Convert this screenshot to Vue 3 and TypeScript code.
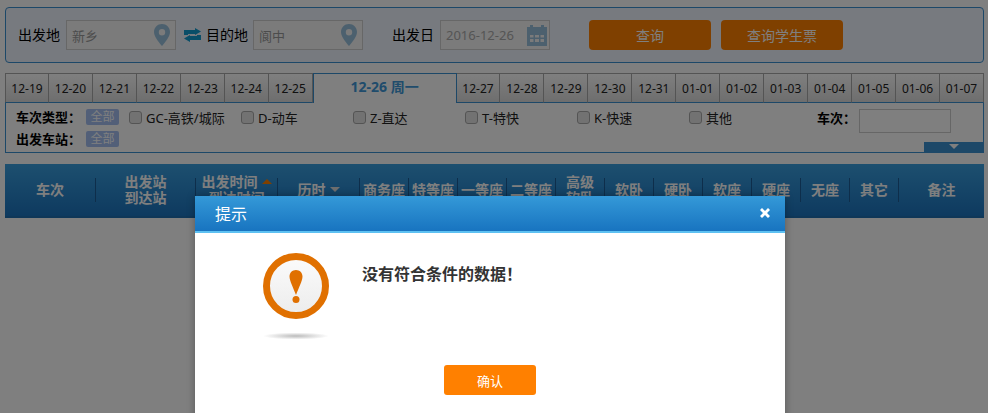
<template>
  <div class="page">
    <div class="search">
      <span class="lbl">出发地</span>
      <div class="inp"><span>新乡</span><svg class="pin" viewBox="0 0 16 22"><path fill-rule="evenodd" d="M8 0C3.6 0 0 3.5 0 7.9c0 5 6 11.300 8 14.100 2-2.800 8-9.100 8-14.100C16 3.500 12.400 0 8 0zm0 5a3.200 3.200 0 1 1 0 6.400A3.200 3.200 0 0 1 8 5z"/></svg></div>
      <svg class="swap" viewBox="0 0 17 14"><path d="M0 7V2h11V0l6 3.500L11 7V6H4v1z"/><path d="M17 7v5H6v2l-6-3.500L6 7v1h7V7z"/></svg>
      <span class="lbl">目的地</span>
      <div class="inp inp-to"><span>阆中</span><svg class="pin" viewBox="0 0 16 22"><path fill-rule="evenodd" d="M8 0C3.6 0 0 3.5 0 7.9c0 5 6 11.300 8 14.100 2-2.800 8-9.100 8-14.100C16 3.500 12.400 0 8 0zm0 5a3.200 3.200 0 1 1 0 6.400A3.200 3.200 0 0 1 8 5z"/></svg></div>
      <span class="lbl lbl-date">出发日</span>
      <div class="inp"><span class="date">2016-12-26</span><svg class="cal" viewBox="0 0 20 21"><path fill-rule="evenodd" d="M0 2h3V0h3v2h8V0h3v2h3v19H0zm3 8v2.500h3.500V10zm5 0v2.500h4V10zm5.500 0v2.500H17V10zM3 14v3h3.500v-3zm5 0v3h4v-3zm5.500 0v3H17v-3z"/></svg></div>
      <button class="btn btn-q">查询</button>
      <button class="btn">查询学生票</button>
    </div>

    <div class="tabs">
      <div v-for="t in tabs" :key="t" class="tab" :class="{ active: t === current }">{{ t === current ? t + ' 周一' : t }}</div>
    </div>

    <div class="filter">
      <div class="frow">
        <b class="flabel">车次类型：</b>
        <span class="all">全部</span>
        <div class="types">
          <label v-for="c in types" :key="c" class="type"><i class="check"></i>{{ c }}</label>
        </div>
        <b class="num-label">车次：</b>
        <div class="num-input"></div>
      </div>
      <div class="frow frow2">
        <b class="flabel">出发车站：</b>
        <span class="all">全部</span>
      </div>
      <div class="toggle"><i></i></div>
    </div>

    <div class="thead">
      <div v-for="c in cols" :key="c.name" class="th" :style="{ width: c.w + 'px' }">
        <span class="th-text">{{ c.name }}<i v-if="c.caret" class="caret" :class="c.caret"></i></span>
        <span v-if="c.sub" class="th-text">{{ c.sub }}</span>
      </div>
    </div>

    <div class="mask"></div>
    <div class="modal">
      <div class="mhead">
        <span>提示</span>
        <svg class="close" viewBox="0 0 12 12"><path d="M1 3l2-2 3 3 3-3 2 2-3 3 3 3-2 2-3-3-3 3-2-2 3-3z"/></svg>
      </div>
      <div class="mbody">
        <div class="icon">
          <svg viewBox="0 0 66 90" width="66" height="90">
            <defs>
              <linearGradient id="face" x1="0" y1="0" x2="0" y2="1">
                <stop offset="0" stop-color="#fbfbfb" />
                <stop offset="1" stop-color="#ececec" />
              </linearGradient>
              <radialGradient id="shade">
                <stop offset="0" stop-color="#bbb" />
                <stop offset="1" stop-color="#fff" />
              </radialGradient>
            </defs>
            <circle cx="33" cy="33" r="29.500" fill="url(#face)" stroke="#e07000" stroke-width="7" />
            <path d="M33 17c-3.700 0-6.500 2.800-6.500 6.500 0 4 4 12 6.500 18.500 2.500-6.500 6.500-14.500 6.500-18.500 0-3.700-2.800-6.500-6.500-6.500z" fill="#e07000" />
            <circle cx="33" cy="46.500" r="3.500" fill="#e07000" />
            <ellipse cx="33" cy="83" rx="33" ry="3.500" fill="url(#shade)" />
          </svg>
        </div>
        <div class="msg">没有符合条件的数据！</div>
      </div>
      <div class="mfoot"><button class="ok">确认</button></div>
    </div>
  </div>
</template>

<script setup lang="ts">
const current = '12-26';
const tabs: string[] = [
  '12-19', '12-20', '12-21', '12-22', '12-23', '12-24', '12-25', '12-26',
  '12-27', '12-28', '12-29', '12-30', '12-31',
  '01-01', '01-02', '01-03', '01-04', '01-05', '01-06', '01-07',
];
const types: string[] = ['GC-高铁/城际', 'D-动车', 'Z-直达', 'T-特快', 'K-快速', '其他'];

interface Col {
  name: string;
  sub?: string;
  w: number;
  caret?: string;
}
const cols: Col[] = [
  { name: '车次', w: 91 },
  { name: '出发站', sub: '到达站', w: 100 },
  { name: '出发时间', sub: '到达时间', w: 82, caret: 'up' },
  { name: '历时', w: 82, caret: 'down' },
  { name: '商务座', w: 49 },
  { name: '特等座', w: 49 },
  { name: '一等座', w: 49 },
  { name: '二等座', w: 49 },
  { name: '高级', sub: '软卧', w: 49 },
  { name: '软卧', w: 49 },
  { name: '硬卧', w: 49 },
  { name: '软座', w: 49 },
  { name: '硬座', w: 49 },
  { name: '无座', w: 49 },
  { name: '其它', w: 49 },
  { name: '备注', w: 85 },
];
</script>

<style scoped>
.page {
  position: relative;
  width: 988px;
  height: 413px;
  overflow: hidden;
  box-sizing: border-box;
  padding: 7px 4px 0 5px;
  background: #fff;
  font-family: "Noto Sans", "Noto Sans CJK SC", sans-serif;
  color: #000;
}
.search {
  display: flex;
  align-items: center;
  height: 56px;
  box-sizing: border-box;
  padding-left: 12px;
  border: 1px solid #3a90d0;
  border-radius: 4px;
  background: #eef4ff;
}
.lbl {
  font-size: 14px;
  line-height: 30px;
  width: 42px;
  flex: none;
}
.inp {
  display: flex;
  align-items: center;
  justify-content: space-between;
  width: 110px;
  height: 30px;
  margin-left: 6px;
  box-sizing: border-box;
  padding: 0 2px 0 5px;
  flex: none;
  border: 1px solid #cfcfcf;
  background: #f6f6f6;
  font-size: 13px;
  color: #999;
}
.inp-to {
  margin-left: 5px;
}
.pin {
  width: 16px;
  height: 22px;
  margin-right: 3px;
  fill: #98c0dc;
}
.swap {
  width: 17px;
  height: 14px;
  margin: 0 5px 0 8px;
  fill: #149cd0;
  flex: none;
}
.lbl-date {
  margin-left: 29px;
}
.date {
  color: #aaa;
}
.cal {
  width: 20px;
  height: 21px;
  fill: #98c0dc;
  margin-top: 1px;
}
.btn {
  width: 122px;
  height: 30px;
  margin-left: 10px;
  flex: none;
  border: 0;
  border-radius: 4px;
  padding: 0;
  background: #ff8000;
  color: #fff;
  font: 14px "Noto Sans", "Noto Sans CJK SC", sans-serif;
}
.btn-q {
  margin-left: 39px;
}
.tabs {
  display: flex;
  height: 30px;
  margin-top: 10px;
  box-sizing: border-box;
}
.tab {
  width: 44px;
  height: 30px;
  box-sizing: border-box;
  border: 1px solid #a8a8a8;
  border-left: 0;
  border-bottom: 1px solid #3a90d0;
  text-align: center;
  line-height: 30px;
  font-size: 12px;
  color: #222;
  background: linear-gradient(#fff, #dcdcdc);
}
.tab:first-child {
  border-left: 1px solid #a8a8a8;
}
.tab.active {
  width: 144px;
  border: 1px solid #3a90d0;
  border-bottom: 0;
  background: #fff;
  color: #4098d8;
  font-size: 14px;
  font-weight: 700;
  line-height: 26px;
}
.filter {
  position: relative;
  height: 51px;
  box-sizing: border-box;
  margin-top: -1px;
  padding: 6px 0 0 10px;
  border: 1px solid #3a90d0;
  border-top-color: transparent;
  font-size: 13px;
}
.frow {
  display: flex;
  align-items: flex-start;
  height: 24px;
}
.frow2 {
  margin-top: -2px;
  height: 16px;
}
.flabel {
  width: 70px;
  line-height: 16px;
  flex: none;
}
.all {
  width: 33px;
  height: 16px;
  flex: none;
  border-radius: 2px;
  background: #a4bef0;
  color: #fff;
  font-size: 12px;
  text-align: center;
  line-height: 16px;
}
.types {
  display: flex;
  flex: none;
  margin-left: 10px;
}
.type {
  display: flex;
  align-items: center;
  width: 112px;
  height: 16px;
  color: #222;
}
.check {
  width: 11px;
  height: 11px;
  margin-right: 4px;
  border: 1px solid #a8a8a8;
  border-radius: 3px;
  background: #e4e4e4;
}
.num-label {
  margin-left: 16px;
  width: 42px;
  flex: none;
  line-height: 18px;
}
.num-input {
  width: 92px;
  height: 24px;
  box-sizing: border-box;
  border: 1px solid #ccc;
}
.toggle {
  position: absolute;
  right: 0;
  bottom: 0;
  width: 59px;
  height: 10px;
  background: #3a90d0;
  display: flex;
  justify-content: center;
}
.toggle i {
  margin-top: 2px;
  width: 0;
  height: 0;
  border: 5px solid transparent;
  border-top-color: #fff;
  border-bottom: 0;
}
.thead {
  display: flex;
  height: 54px;
  margin-top: 11px;
  box-sizing: border-box;
  align-items: center;
  border-bottom: 2px solid #1f6fb0;
  background: linear-gradient(#3a9fdf, #1c74bf);
}
.th {
  display: flex;
  flex-direction: column;
  justify-content: center;
  align-items: center;
  height: 24px;
  box-sizing: border-box;
  flex: none;
  border-right: 1px solid #1d5c96;
  color: #fff;
  font-size: 14px;
  font-weight: 700;
  line-height: 16px;
}
.th:last-child {
  border-right: 0;
}
.th-text {
  white-space: nowrap;
}
.caret {
  display: inline-block;
  width: 0;
  height: 0;
  margin-left: 4px;
  vertical-align: 3px;
  border: 5px solid transparent;
}
.caret.up {
  border-top: 0;
  border-bottom-color: #ff8000;
}
.caret.down {
  border-bottom: 0;
  border-top-color: #ddd;
}
.mask {
  position: absolute;
  inset: 0;
  background: rgba(0, 0, 0, 0.5);
}
.modal {
  position: absolute;
  left: 195px;
  top: 196px;
  width: 590px;
  height: 260px;
  background: #fff;
  box-shadow: 0 0 8px rgba(0, 0, 0, 0.3);
}
.mhead {
  display: flex;
  align-items: center;
  justify-content: space-between;
  height: 37px;
  box-sizing: border-box;
  padding: 0 14px 2px 20px;
  border-bottom: 2px solid #5ec1f2;
  background: linear-gradient(#3499d8, #1874c0);
  color: #fff;
  font-size: 16px;
}
.close {
  width: 12px;
  height: 12px;
  fill: #fff;
}
.mbody {
  display: flex;
  align-items: flex-start;
  height: 132px;
  box-sizing: border-box;
  padding: 20px 0 0 68px;
}
.icon {
  width: 66px;
  flex: none;
}
.msg {
  margin: 9px 0 0 33px;
  font-size: 16px;
  line-height: 24px;
  font-weight: 700;
  color: #333;
}
.mfoot {
  display: flex;
  justify-content: center;
}
.ok {
  width: 92px;
  height: 30px;
  border: 0;
  border-radius: 3px;
  padding: 0;
  background: #ff8000;
  color: #fff;
  font: 13px "Noto Sans", "Noto Sans CJK SC", sans-serif;
}
</style>
